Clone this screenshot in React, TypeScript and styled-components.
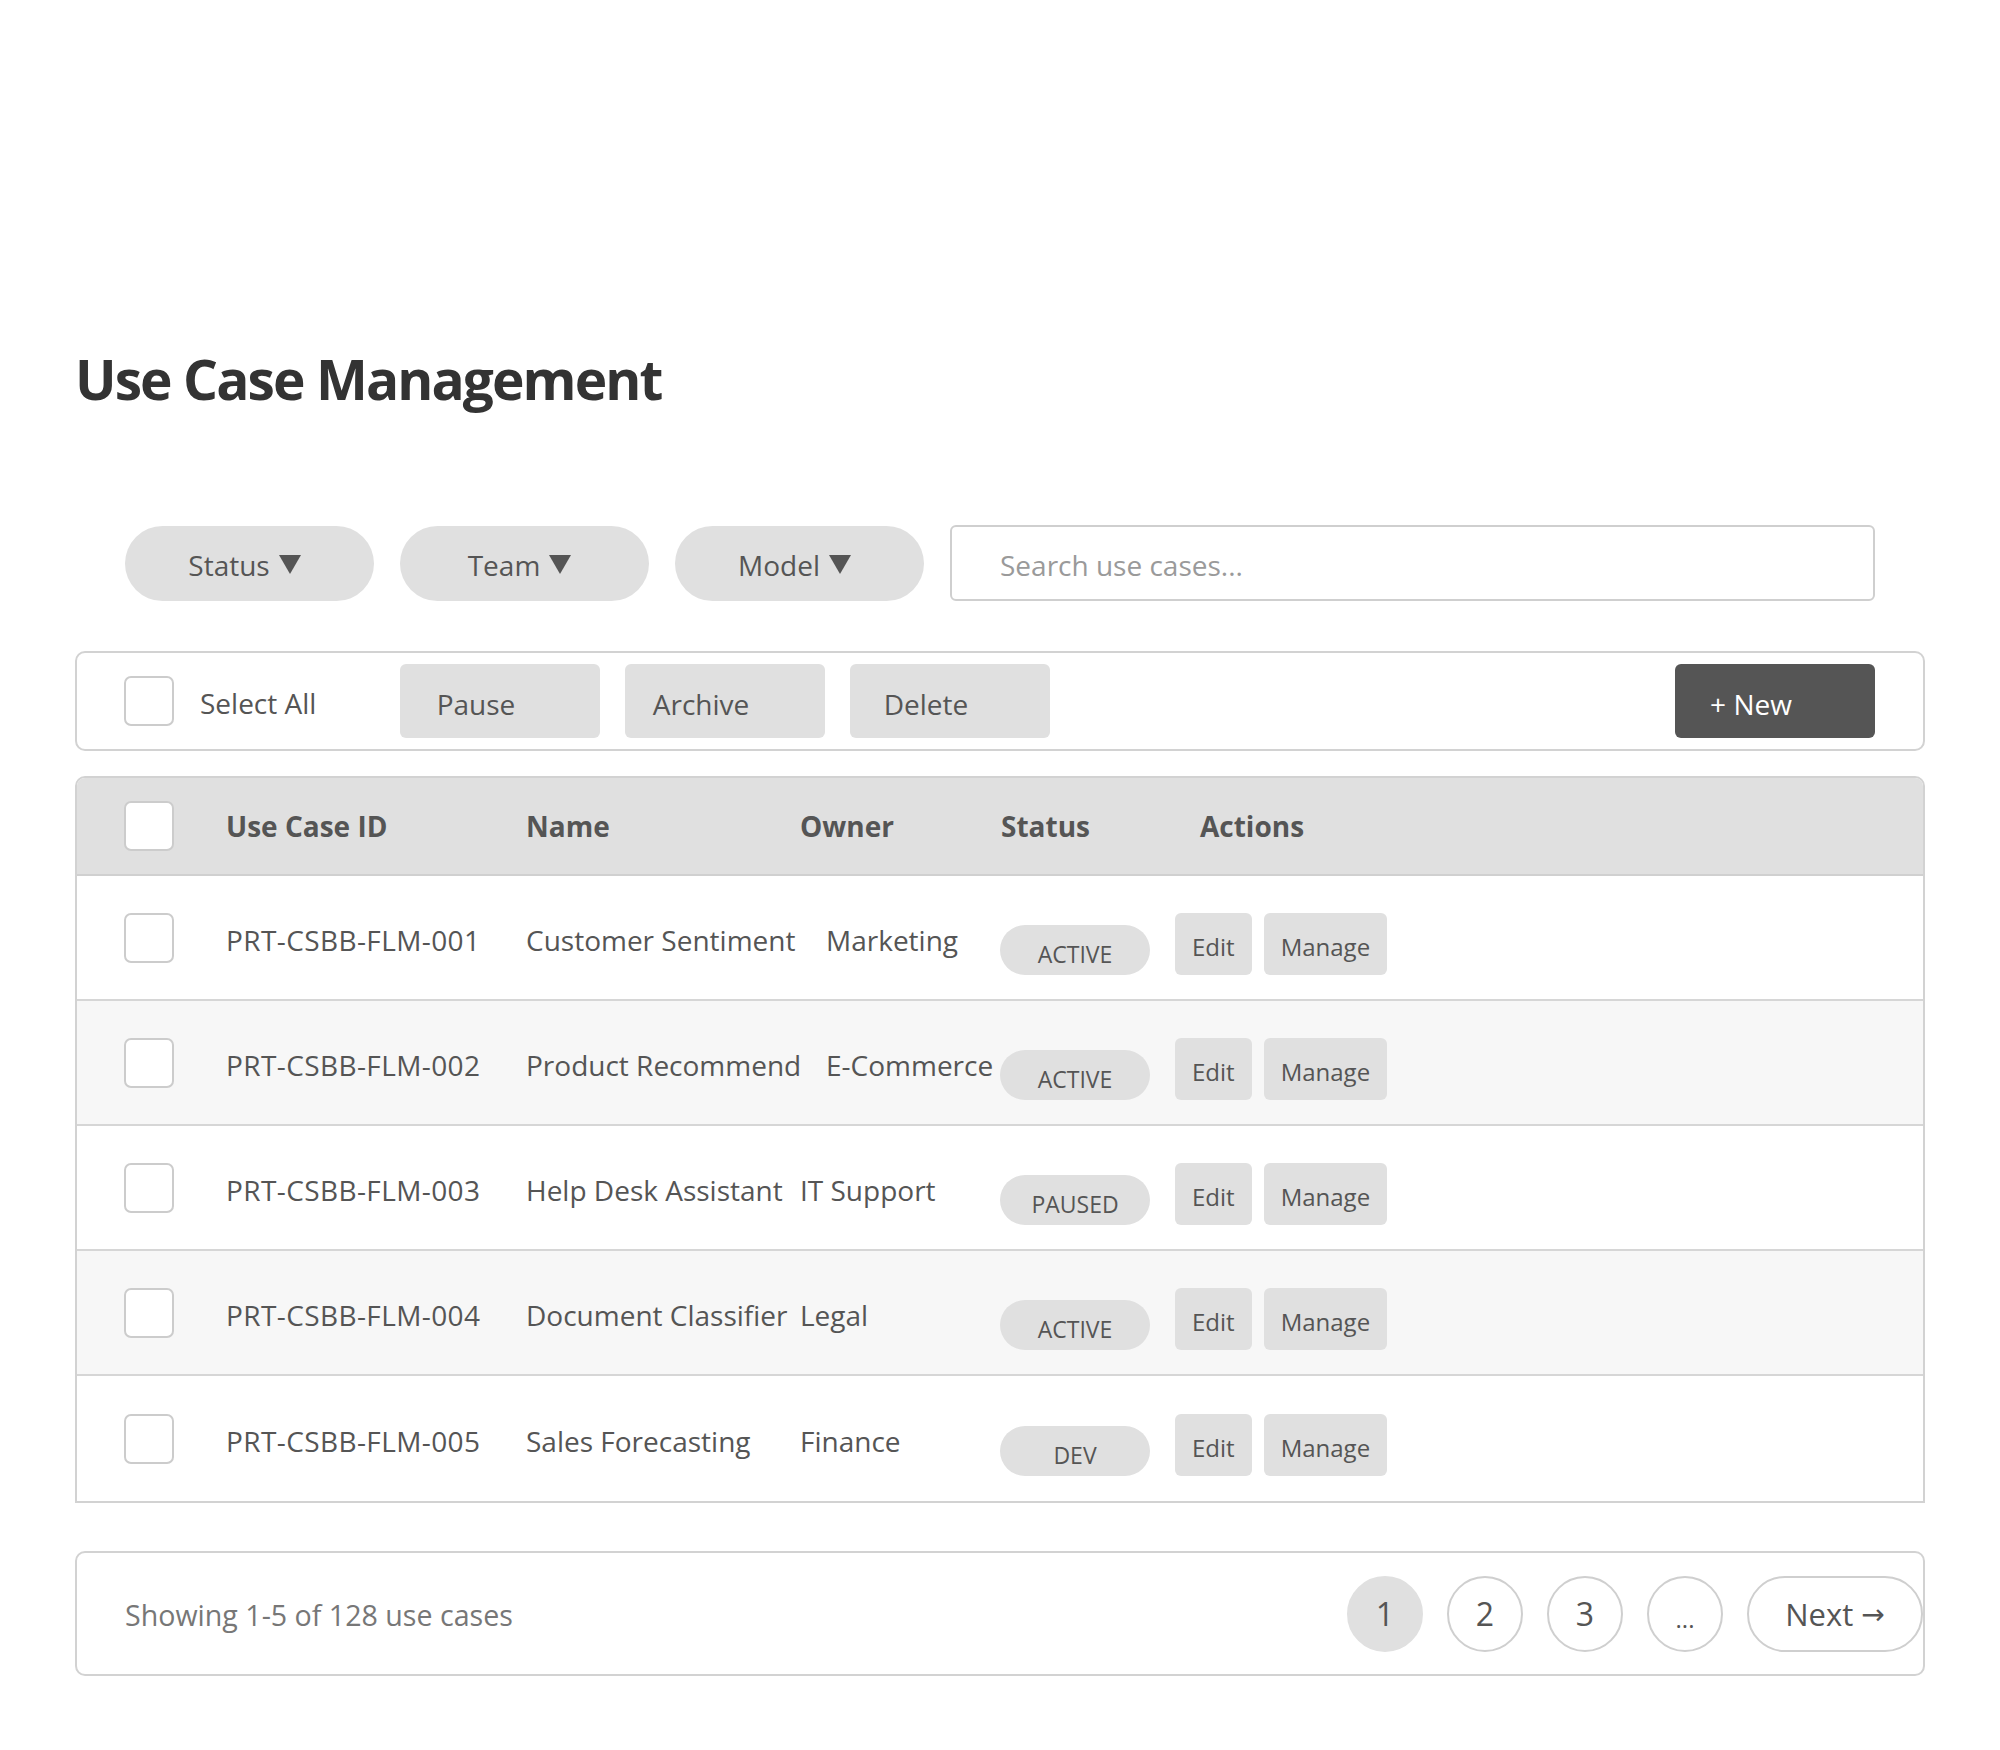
import React from "react";
import styled, { createGlobalStyle } from "styled-components";

const GlobalStyle = createGlobalStyle`
  html, body { margin: 0; padding: 0; background: #ffffff; }
  body { font-family: "Open Sans", "Noto Sans", sans-serif; color: #555555; }
  *, *::before, *::after { box-sizing: border-box; }
`;

const Page = styled.div`
  padding: 344px 75px 60px;
  width: 2000px;
`;

const Title = styled.h1`
  margin: 0;
  font-size: 55px;
  line-height: 70px;
  font-weight: 700;
  color: #333333;
  letter-spacing: -1.9px;
`;

const FilterRow = styled.div`
  margin-top: 111px;
  padding: 0 50px;
  display: flex;
  align-items: center;
  gap: 26px;
`;

const Chip = styled.button`
  flex: 0 0 249px;
  height: 75px;
  border: none;
  border-radius: 38px;
  background: #e0e0e0;
  color: #555555;
  font-family: inherit;
  font-size: 28px;
  display: flex;
  align-items: center;
  justify-content: center;
  gap: 9px;
  padding: 3px 10px 0 0;
`;

const SearchInput = styled.input`
  flex: 1;
  height: 76px;
  border: 2px solid #cfcfcf;
  border-radius: 6px;
  padding: 3px 0 0 48px;
  font-family: inherit;
  font-size: 28px;
  color: #555555;
  outline: none;
  &::placeholder { color: #9a9a9a; }
`;

const BulkBar = styled.div`
  margin-top: 50px;
  height: 100px;
  border: 2px solid #d2d2d2;
  border-radius: 10px;
  display: flex;
  align-items: center;
  gap: 25px;
  padding: 0 48px 0 47px;
`;

const SelectGroup = styled.label`
  flex: 0 0 251px;
  display: flex;
  align-items: center;
  gap: 26px;
  font-size: 28px;
  color: #555555;
  padding-top: 4px;
`;

const Checkbox = styled.span`
  flex: 0 0 50px;
  width: 50px;
  height: 50px;
  border: 2px solid #cccccc;
  border-radius: 7px;
  background: #ffffff;
  display: inline-block;
`;

const CheckboxBox = styled(Checkbox)`
  margin-top: -4px;
`;

const BulkButton = styled.button<{ $primary?: boolean }>`
  flex: 0 0 200px;
  height: 74px;
  border: none;
  border-radius: 6px;
  background: ${(p) => (p.$primary ? "#555555" : "#e0e0e0")};
  color: ${(p) => (p.$primary ? "#ffffff" : "#555555")};
  font-family: inherit;
  font-size: 28px;
  padding: 6px 72px 0 24px;
  text-align: center;
  white-space: nowrap;
  margin-left: ${(p) => (p.$primary ? "auto" : "0")};
`;

const Table = styled.div`
  margin-top: 25px;
  border: 2px solid #d2d2d2;
  border-radius: 10px 10px 0 0;
  overflow: hidden;
`;

const HeaderRow = styled.div`
  height: 98px;
  background: #e0e0e0;
  border-bottom: 2px solid #d0d0d0;
  display: grid;
  grid-template-columns: 102px 300px 274px 201px 199px 1fr;
  align-items: center;
  padding-left: 47px;
`;

const HeaderCell = styled.div`
  font-size: 28px;
  font-weight: 700;
  color: #555555;
  white-space: nowrap;
`;

const DataRow = styled.div<{ $alt: boolean; $name: number }>`
  height: 125px;
  background: ${(p) => (p.$alt ? "#f7f7f7" : "#ffffff")};
  border-bottom: 2px solid #d6d6d6;
  display: grid;
  grid-template-columns: 102px 300px ${(p) => p.$name}px ${(p) => 474 - p.$name}px 175px 1fr;
  align-items: center;
  padding-left: 47px;
  &:last-child { border-bottom: none; }
`;

const Cell = styled.div<{ $mono?: boolean }>`
  font-size: 28px;
  color: #555555;
  white-space: nowrap;
  padding-top: 4px;
  letter-spacing: ${(p) => (p.$mono ? "0.4px" : "0")};
`;

const Badge = styled.span`
  width: 150px;
  height: 50px;
  border-radius: 25px;
  background: #e0e0e0;
  color: #555555;
  font-size: 23px;
  display: flex;
  align-items: center;
  justify-content: center;
  padding-top: 8px;
  margin-top: 25px;
`;

const Actions = styled.div`
  display: flex;
  gap: 12px;
  margin-top: 13px;
`;

const SmallButton = styled.button`
  height: 62px;
  border: none;
  border-radius: 6px;
  background: #e0e0e0;
  color: #555555;
  font-family: inherit;
  font-size: 24px;
  padding: 5px 17px 0;
`;

const Footer = styled.div`
  margin-top: 48px;
  height: 125px;
  border: 2px solid #d2d2d2;
  border-radius: 10px;
  display: flex;
  align-items: center;
  justify-content: space-between;
  padding: 0 0 0 48px;
`;

const FooterText = styled.span`
  font-size: 28.6px;
  color: #777777;
  padding-top: 2px;
`;

const Pagination = styled.div`
  display: flex;
  gap: 24px;
  align-items: center;
`;

const PageButton = styled.button<{ $active?: boolean; $wide?: boolean }>`
  width: ${(p) => (p.$wide ? "176px" : "76px")};
  height: 76px;
  border-radius: 38px;
  border: 2px solid ${(p) => (p.$active ? "#e0e0e0" : "#cfcfcf")};
  background: ${(p) => (p.$active ? "#e0e0e0" : "#ffffff")};
  color: #555555;
  font-family: inherit;
  font-size: ${(p) => (p.$wide ? "31px" : "32px")};
  padding: 0;
  display: flex;
  align-items: center;
  justify-content: center;
  gap: 8px;
`;

const Dots = styled.span`
  font-size: 24px;
  padding-top: 10px;
`;

const Arrow = styled.span`
  font-family: "DejaVu Sans", sans-serif;
  font-size: 28px;
  padding-top: 2px;
`;

const Caret = () => (
  <svg width="22" height="19" viewBox="0 0 22 19" aria-hidden="true">
    <polygon points="0,0 22,0 11,19" fill="#555555" />
  </svg>
);

const rows = [
  { id: "PRT-CSBB-FLM-001", name: "Customer Sentiment", owner: "Marketing", status: "ACTIVE", nameW: 300 },
  { id: "PRT-CSBB-FLM-002", name: "Product Recommend", owner: "E-Commerce", status: "ACTIVE", nameW: 300 },
  { id: "PRT-CSBB-FLM-003", name: "Help Desk Assistant", owner: "IT Support", status: "PAUSED", nameW: 274 },
  { id: "PRT-CSBB-FLM-004", name: "Document Classifier", owner: "Legal", status: "ACTIVE", nameW: 274 },
  { id: "PRT-CSBB-FLM-005", name: "Sales Forecasting", owner: "Finance", status: "DEV", nameW: 274 },
];

export default function App() {
  return (
    <>
      <GlobalStyle />
      <Page>
        <Title>Use Case Management</Title>

        <FilterRow>
          <Chip>Status <Caret /></Chip>
          <Chip>Team <Caret /></Chip>
          <Chip>Model <Caret /></Chip>
          <SearchInput placeholder="Search use cases..." />
        </FilterRow>

        <BulkBar>
          <SelectGroup>
            <CheckboxBox />
            Select All
          </SelectGroup>
          <BulkButton>Pause</BulkButton>
          <BulkButton>Archive</BulkButton>
          <BulkButton>Delete</BulkButton>
          <BulkButton $primary>+ New</BulkButton>
        </BulkBar>

        <Table>
          <HeaderRow>
            <Checkbox />
            <HeaderCell>Use Case ID</HeaderCell>
            <HeaderCell>Name</HeaderCell>
            <HeaderCell>Owner</HeaderCell>
            <HeaderCell>Status</HeaderCell>
            <HeaderCell>Actions</HeaderCell>
          </HeaderRow>
          {rows.map((r, i) => (
            <DataRow key={r.id} $alt={i % 2 === 1} $name={r.nameW}>
              <Checkbox />
              <Cell $mono>{r.id}</Cell>
              <Cell>{r.name}</Cell>
              <Cell>{r.owner}</Cell>
              <Badge>{r.status}</Badge>
              <Actions>
                <SmallButton>Edit</SmallButton>
                <SmallButton>Manage</SmallButton>
              </Actions>
            </DataRow>
          ))}
        </Table>

        <Footer>
          <FooterText>Showing 1-5 of 128 use cases</FooterText>
          <Pagination>
            <PageButton $active>1</PageButton>
            <PageButton>2</PageButton>
            <PageButton>3</PageButton>
            <PageButton><Dots>...</Dots></PageButton>
            <PageButton $wide>Next<Arrow>→</Arrow></PageButton>
          </Pagination>
        </Footer>
      </Page>
    </>
  );
}
